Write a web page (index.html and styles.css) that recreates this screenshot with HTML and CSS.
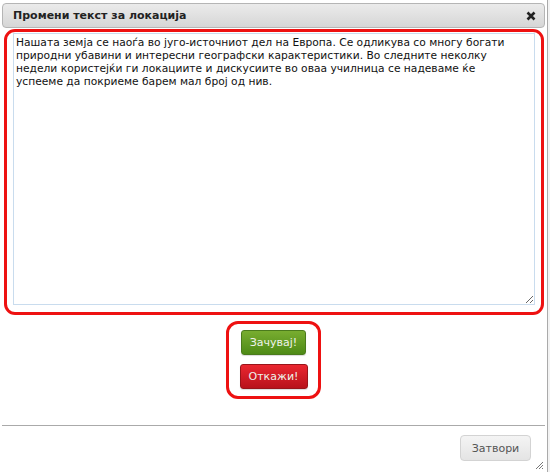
FILE: index.html
```html
<!DOCTYPE html>
<html>
<head>
<meta charset="utf-8">
<link rel="stylesheet" href="styles.css">
</head>
<body>
<div class="page">
  <div class="dialog">
    <div class="titlebar">
      <span class="title">Промени текст за локација</span>
      <span class="close"><svg width="10" height="10" viewBox="0 0 10 10"><path d="M1.5 1.5 L8.5 8.5 M8.5 1.5 L1.5 8.5" stroke="#222" stroke-width="2.6" stroke-linecap="butt"/></svg></span>
    </div>
    <div class="content">
      <div class="mark mark-text">
        <textarea class="editor">Нашата земја се наоѓа во југо-источниот дел на Европа. Се одликува со многу богати природни убавини и интересни географски карактеристики. Во следните неколку недели користејќи ги локациите и дискусиите во оваа училница се надеваме ќе успееме да покриеме барем мал број од нив.</textarea>
      </div>
      <div class="actions">
        <div class="mark mark-buttons">
          <button class="btn btn-save">Зачувај!</button>
          <button class="btn btn-cancel">Откажи!</button>
        </div>
      </div>
    </div>
    <div class="footer">
      <button class="btn-close">Затвори</button>
      <svg class="grip" width="10" height="10" viewBox="0 0 10 10"><path d="M9 2 L2 9 M9 5 L5 9 M9 8 L8 9" stroke="#777" stroke-width="1"/></svg>
    </div>
  </div>
  <div class="side"></div>
</div>
</body>
</html>
```
FILE: styles.css
```css
html, body {
  margin: 0;
  padding: 0;
}
body {
  width: 550px;
  height: 472px;
  overflow: hidden;
  background: #fff;
  font-family: "DejaVu Sans", Verdana, sans-serif;
}
.page {
  display: flex;
  height: 472px;
}
.dialog {
  width: 543px;
  padding: 3px 2px 0 2px;
  border-right: 1px solid #aaa;
  background: #fff;
  display: flex;
  flex-direction: column;
  position: relative;
}
.side {
  flex: 1;
  background: #f3f3f3;
}
.titlebar {
  height: 23px;
  border: 1px solid #b5b5b5;
  border-radius: 4px;
  background: linear-gradient(#ebebeb, #d6d6d6);
  display: flex;
  align-items: center;
  justify-content: space-between;
  padding: 0 8px 0 10px;
}
.title {
  font-size: 11px;
  font-weight: bold;
  color: #222;
}
.close {
  display: flex;
  align-items: center;
}
.content {
  display: flex;
  flex-direction: column;
}
.mark {
  border: 3px solid #ee1111;
  border-radius: 11px;
}
.mark-text {
  margin: 1px 1px 0 2px;
  padding: 1px 6px 7px 6px;
}
.editor {
  display: block;
  box-sizing: border-box;
  width: 522px;
  height: 272px;
  margin: 0;
  border: 1px solid #c9dcee;
  padding: 2px 16px 2px 2px;
  font-family: "DejaVu Sans", Verdana, sans-serif;
  font-size: 10.7px;
  line-height: 13px;
  color: #111;
  resize: both;
  outline: none;
}
.actions {
  display: flex;
  justify-content: center;
  margin-top: 6px;
}
.mark-buttons {
  width: 89px;
  padding: 6px 0 7px 0;
  display: flex;
  flex-direction: column;
  align-items: center;
  gap: 9px;
  border-radius: 12px;
}
.btn {
  height: 25px;
  border-radius: 3px;
  font-family: "DejaVu Sans", Verdana, sans-serif;
  font-size: 11px;
  color: #eef2ea;
  padding: 0 6px;
  box-shadow: 0 1px 1px rgba(0,0,0,0.15);
}
.btn-save {
  width: 65px;
  border: 1px solid #4a7a1c;
  background: linear-gradient(#78ad30, #4e8a16);
}
.btn-cancel {
  width: 68px;
  border: 1px solid #99141a;
  background: linear-gradient(#ea2630, #b8121b);
}
.footer {
  margin-top: 26px;
  border-top: 1px solid #aaa;
  display: flex;
  justify-content: flex-end;
  padding: 9px 14px 0 0;
  flex: 1;
  position: relative;
}
.btn-close {
  width: 71px;
  height: 26px;
  border: 1px solid #d3d3d3;
  border-radius: 4px;
  background: linear-gradient(#f4f4f4, #e4e4e4);
  color: #555;
  font-family: "DejaVu Sans", Verdana, sans-serif;
  font-size: 11px;
}
.grip {
  position: absolute;
  right: 1px;
  bottom: 2px;
}
```
